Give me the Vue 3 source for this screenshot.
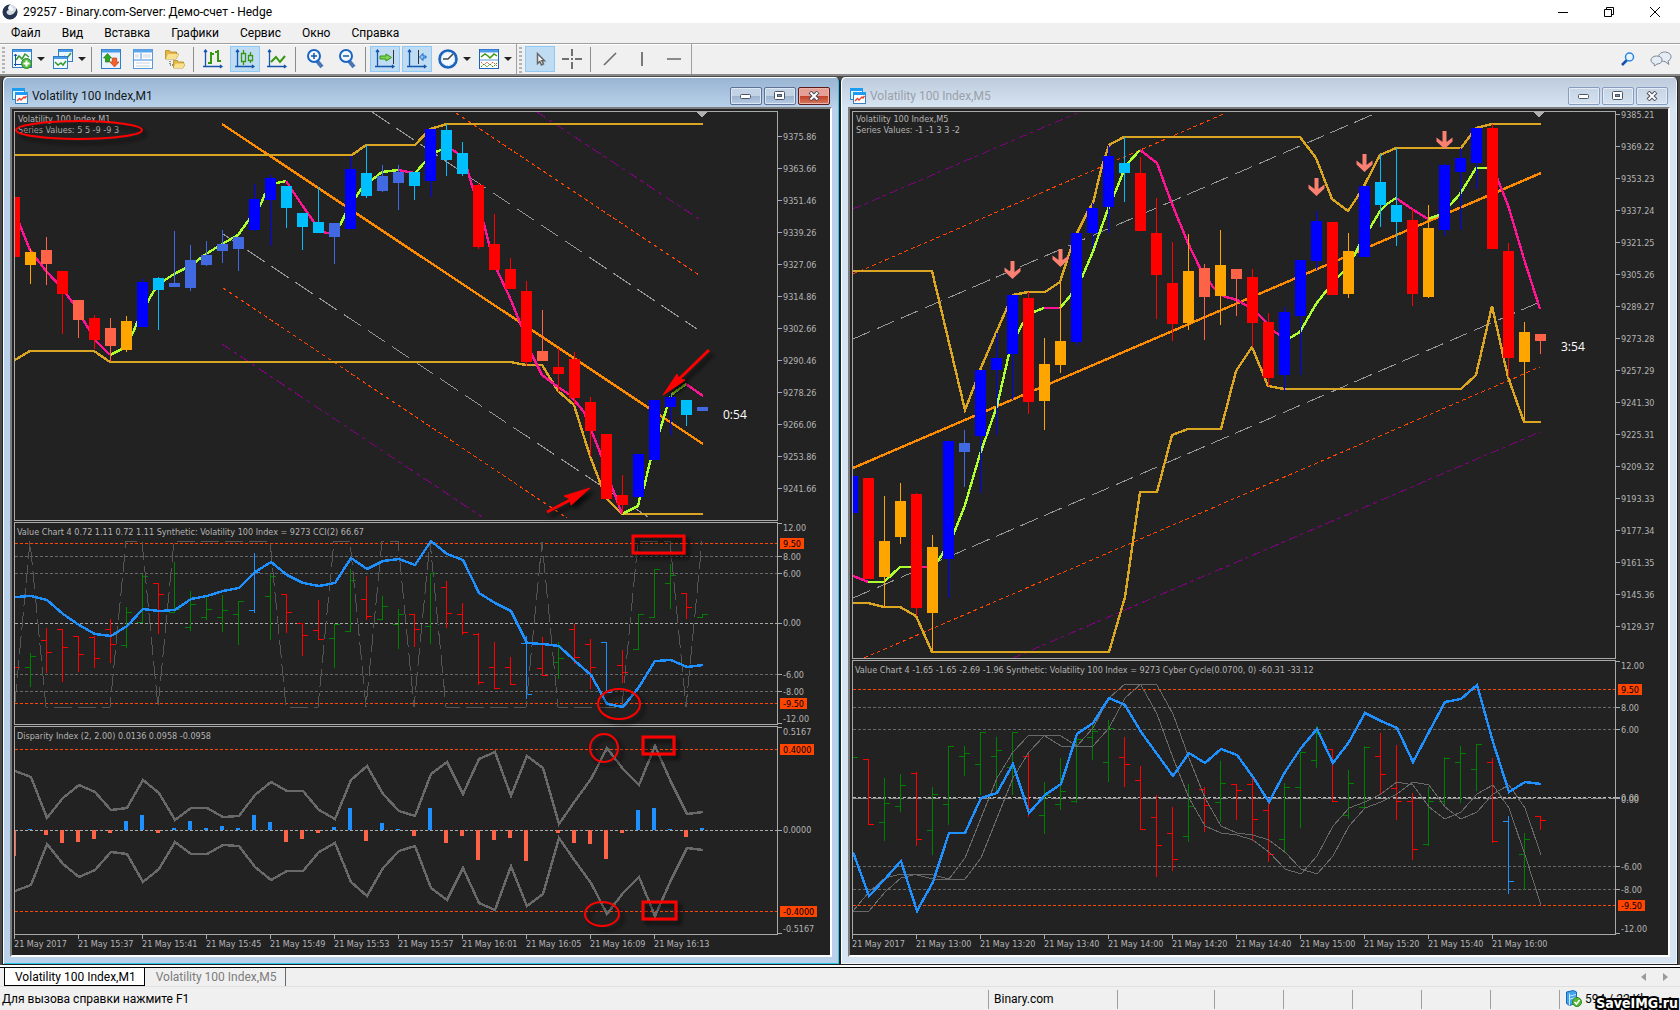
<script setup>
const STEP = 16
const COLORS = {
  r: '#ff0000', o: '#ffa500', t: '#ff6347', b: '#0000ff', s: '#00bfff', y: '#4169e1',
  g: '#008000', d: '#1e90ff', pink: '#ff1493', lime: '#adff2f',
}

const pairs = (list, f = (v) => v) => {
  const out = []
  for (let i = 0; i < list.length; i += 2) out.push(`${list[i]},${f(list[i + 1])}`)
  return out.join(' ')
}
const byBar = (left, ys) => ys.map((y, i) => `${left + i * STEP + 1},${y}`).join(' ')

// rows: colour, body top, body bottom, wick top, wick bottom
const toCandles = (left, rows, f = (v) => v) => rows.map(([c, top, bottom, high, low], i) => {
  const x = left + i * STEP
  const t = f(top), b = f(bottom), h = f(high ?? top), l = f(low ?? bottom)
  return { x, t, height: Math.max(b - t, 2), h, wick: l - h, color: COLORS[c] }
})

// rows: colour, high, low, open, close
const toBars = (left, rows) => rows.map(([c, high, low, open, close], i) => {
  const x = left + i * STEP
  return { color: COLORS[c], path: `M${x} ${high}h1V${low + 1}h-1zM${x - 5} ${open}h5v1h-5zM${x + 1} ${close}h5v1h-5z` }
})

const scaleLabels = (first, step, count, y) =>
  Array.from({ length: count }, (_, k) => ({ y: y + k * 32, text: (first - step * k).toFixed(2) }))

const zoomed = (v) => Math.round(v * 1.1288 - 9)

const upperBand = [771, 777, 818, 798, 785, 792, 810, 808, 780, 793, 820, 808, 808, 817, 816, 795, 782, 791, 791, 810, 819, 780, 766, 794, 811, 816, 774, 762, 794, 759, 752, 796, 756, 768, 824, 801, 779, 748, 769, 785, 746, 782, 814, 812]
const histogram = [-26, 1, -5, -13, -12, -9, -3, 9, 15, -3, 2, 9, 2, 4, 2, 15, 8, -12, -9, -3, 3, 22, -11, 7, 1, -6, 22, -13, -6, -30, -10, -8, -31, 0, -3, -13, -14, -29, -3, 20, 22, 1, -7, 2]
const cycle = [911, 892, 878, 874, 875, 879, 879, 858, 818, 778, 752, 735, 736, 746, 746, 728, 698, 684, 685, 714, 758, 798, 826, 833, 835, 840, 852, 869, 874, 856, 826, 808, 802, 794, 782, 785, 807, 819, 812, 794, 785, 808, 855, 905]

const charts = [
  {
    id: 'm1',
    title: 'Volatility 100 Index,M1',
    active: true,
    left: 12,
    panels: [[111, 520], [522, 724], [726, 934]],
    notes: [
      { x: 18, y: 122, text: 'Volatility 100 Index,M1' },
      { x: 18, y: 133, text: 'Series Values: 5 5 -9 -9 3' },
      { x: 17, y: 535, text: 'Value Chart 4 0.72 1.11 0.72 1.11 Synthetic: Volatility 100 Index = 9273 CCI(2) 66.67' },
      { x: 17, y: 739, text: 'Disparity Index (2, 2.00) 0.0136 0.0958 -0.0958' },
    ],
    timer: { x: 723, y: 419, text: '0:54' },
    scale: scaleLabels(9375.86, 12.2, 12, 136),
    labels: [
      { y: 527, text: '12.00', tick: 523 }, { y: 556, text: '8.00', tick: 556 }, { y: 573, text: '6.00', tick: 573 }, { y: 622, text: '0.00', tick: 623 },
      { y: 674, text: '-6.00', tick: 674 }, { y: 691, text: '-8.00', tick: 691 }, { y: 718, text: '-12.00', tick: 723 },
      { y: 731, text: '0.5167', tick: 727 }, { y: 829, text: '0.0000', tick: 830 }, { y: 928, text: '-0.5167', tick: 933 },
    ],
    marks: [
      { y: 543, text: '9.50', w: 24 }, { y: 703, text: '-9.50', w: 27 }, { y: 749, text: '0.4000', w: 34 }, { y: 911, text: '-0.4000', w: 37 },
    ],
    levels: [
      { y: 543, c: '#ff4500' }, { y: 556, c: '#696969' }, { y: 573, c: '#696969' }, { y: 623, c: '#a9a9a9' }, { y: 674, c: '#696969' },
      { y: 691, c: '#696969' }, { y: 703, c: '#ff4500' }, { y: 749, c: '#ff4500' }, { y: 830, c: '#a9a9a9' }, { y: 911, c: '#ff4500' },
    ],
    times: ['2017', '15:37', '15:41', '15:45', '15:49', '15:53', '15:57', '16:01', '16:05', '16:09', '16:13'],
    marker: 702,
    channel: [
      { d: 'M372 112L697 329M223 234L648 517', c: '#989898', dash: '21 8' },
      { d: 'M456 113L699 275M223 288L567 518', c: '#ff4500', dash: '4 3' },
      { d: 'M537 112L699 219M222 344L482 517', c: '#800080', dash: '10 4 4 4' },
      { d: 'M222 124L703 444', c: '#ff8c00', w: 2.4 },
    ],
    bands: [
      pairs([15, 155, 352, 155, 366, 145, 415, 145, 430, 129, 447, 124, 703, 124]),
      pairs([15, 360, 30, 351, 94, 351, 110, 362, 510, 362, 526, 365, 542, 365, 558, 391, 574, 405, 590, 456, 606, 498, 622, 514, 703, 514]),
    ],
    average: [
      { c: 'pink', p: pairs([14, 205, 20, 225, 30, 250, 46, 271, 62, 288, 73, 303, 82, 318, 96, 341, 110, 355]) },
      { c: 'lime', p: pairs([110, 355, 122, 349, 133, 333, 137, 323, 148, 301, 154, 291, 165, 280, 174, 274, 190, 266, 206, 254, 222, 244, 238, 235, 248, 221, 261, 204, 265, 194, 271, 185, 277, 183, 286, 181]) },
      { c: 'pink', p: pairs([286, 181, 302, 205, 314, 222, 322, 232, 334, 234]) },
      { c: 'lime', p: pairs([334, 234, 340, 225, 345, 215, 356, 197, 361, 189, 373, 179, 382, 172, 398, 170]) },
      { c: 'pink', p: pairs([398, 170, 414, 173]) },
      { c: 'lime', p: pairs([416, 172, 425, 162, 430, 156, 436, 152, 446, 148]) },
      { c: 'pink', p: pairs([446, 148, 453, 150, 464, 158, 473, 189, 484, 224, 489, 244, 497, 270, 510, 298, 519, 320, 532, 355, 542, 375, 558, 387, 570, 395, 584, 412, 601, 455, 612, 487, 622, 514]) },
      { c: 'lime', p: pairs([622, 514, 638, 506, 640, 497, 644, 487, 650, 462, 660, 430, 667, 407, 671, 395, 686, 384]) },
      { c: 'pink', p: pairs([686, 384, 703, 396]) },
    ],
    candles: toCandles(14, [
      ['r', 197, 257], ['o', 252, 265, 249, 284], ['t', 250, 264, 237, 285], ['r', 271, 294, 271, 334], ['t', 300, 320, 300, 338],
      ['r', 318, 340, 315, 349], ['t', 328, 346, 318, 362], ['o', 321, 350, 316, 352], ['b', 282, 327, 279], ['s', 278, 290, 277, 330],
      ['y', 283, 287, 231], ['y', 260, 288, 245, 291], ['y', 255, 265, 241, 266], ['y', 244, 251, 230, 263], ['y', 237, 249, 237, 271],
      ['b', 199, 230, 184, 231], ['b', 178, 200, 175, 246], ['s', 186, 208, 186, 228], ['s', 213, 227, 213, 250], ['s', 222, 233, 187],
      ['y', 223, 237, 223, 264], ['b', 169, 229, 156], ['s', 173, 196, 145, 198], ['y', 176, 191, 165, 192], ['y', 172, 183, 165, 210],
      ['s', 172, 186, 172, 200], ['b', 129, 181, 129, 197], ['s', 130, 160, 124, 176], ['s', 153, 174, 142, 176], ['r', 185, 247, 183, 249],
      ['r', 244, 270, 214], ['r', 269, 289, 258], ['r', 291, 362, 281, 366], ['t', 351, 361, 310], ['r', 367, 374, 348, 392],
      ['r', 359, 398, 352, 405], ['r', 402, 431, 397, 456], ['r', 434, 499], ['r', 495, 505, 475, 514], ['b', 454, 497], ['b', 400, 460],
      ['b', 397, 407, 393, 435], ['s', 400, 415, 400, 426], ['y', 407, 411],
    ]),
    thin: [
      { p: pairs([15, 702, 30, 541, 46, 707, 110, 707, 126, 541, 142, 541, 158, 707, 174, 541, 270, 541, 286, 707, 318, 707, 334, 541, 350, 541, 366, 707, 382, 541, 398, 541, 414, 707, 430, 541, 446, 707, 526, 707, 542, 542, 558, 707, 622, 707, 638, 541, 670, 541, 686, 707, 702, 541]), c: '#555555', dash: '18 6' },
    ],
    thick: [
      { p: byBar(14, upperBand), c: '#696969' },
      { p: byBar(14, upperBand.map((y) => 1662 - y)), c: '#696969' },
      { p: byBar(14, [597, 596, 600, 614, 625, 634, 636, 626, 609, 611, 610, 599, 596, 591, 588, 572, 562, 575, 583, 586, 583, 558, 569, 561, 559, 565, 541, 554, 560, 593, 603, 611, 643, 644, 646, 661, 675, 704, 707, 687, 661, 660, 667, 665]), c: '#1e90ff' },
    ],
    bars: toBars(14, [
      ['r', 667, 667, 667, 667], ['g', 653, 686, 667, 656], ['r', 628, 672, 640, 652], ['r', 629, 681, 629, 647], ['r', 636, 671, 636, 654],
      ['r', 636, 667, 637, 658], ['r', 619, 662, 629, 644], ['g', 607, 647, 645, 612], ['g', 574, 622, 622, 576], ['r', 583, 633, 583, 594],
      ['g', 562, 612, 612, 609], ['g', 591, 630, 627, 604], ['g', 597, 619, 617, 609], ['g', 595, 631, 617, 610], ['g', 601, 644, 614, 601],
      ['d', 553, 612, 610, 572], ['g', 574, 639, 596, 576], ['r', 594, 632, 594, 612], ['r', 623, 655, 623, 635], ['r', 600, 639, 630, 639],
      ['g', 624, 667, 638, 624], ['g', 569, 631, 631, 580], ['r', 576, 619, 599, 616], ['g', 596, 619, 619, 606], ['g', 609, 648, 624, 614],
      ['r', 614, 646, 614, 629], ['g', 573, 643, 626, 573], ['r', 581, 627, 587, 613], ['r', 603, 634, 614, 632], ['r', 633, 684, 634, 682],
      ['r', 642, 688, 667, 688], ['r', 657, 684, 667, 684], ['d', 636, 698, 643, 694], ['r', 637, 675, 668, 675], ['g', 642, 678, 662, 658],
      ['r', 624, 663, 629, 657], ['r', 639, 688, 644, 667], ['d', 642, 692, 642, 692], ['r', 650, 682, 665, 672], ['g', 614, 649, 649, 614],
      ['g', 569, 617, 617, 569], ['g', 564, 608, 583, 575], ['r', 593, 618, 593, 607], ['g', 614, 617, 617, 614],
    ]),
    columns: histogram.map((v, i) => ({ x: 12 + i * STEP, y: v > 0 ? 830 - v : 830, h: Math.abs(v), c: v > 0 ? '#1e90ff' : '#ff6347' })),
    drops: [],
    annotated: true,
  },
  {
    id: 'm5',
    title: 'Volatility 100 Index,M5',
    active: false,
    left: 850,
    panels: [[111, 658], [660, 934]],
    notes: [
      { x: 856, y: 122, text: 'Volatility 100 Index,M5' },
      { x: 856, y: 133, text: 'Series Values: -1 -1 3 3 -2' },
      { x: 855, y: 673, text: 'Value Chart 4 -1.65 -1.65 -2.69 -1.96 Synthetic: Volatility 100 Index = 9273 Cyber Cycle(0.0700, 0) -60.31 -33.12' },
    ],
    timer: { x: 1561, y: 351, text: '3:54' },
    scale: scaleLabels(9385.21, 15.99, 17, 114),
    labels: [
      { y: 665, text: '12.00', tick: 661 }, { y: 707, text: '8.00', tick: 707 }, { y: 729, text: '6.00', tick: 729 }, { y: 797, text: '0.00', tick: 797 },
      { y: 799, text: '0.00', tick: 798 }, { y: 866, text: '-6.00', tick: 866 }, { y: 889, text: '-8.00', tick: 889 }, { y: 928, text: '-12.00', tick: 933 },
    ],
    marks: [{ y: 689, text: '9.50', w: 24 }, { y: 905, text: '-9.50', w: 27 }],
    levels: [
      { y: 689, c: '#ff4500' }, { y: 707, c: '#696969' }, { y: 729, c: '#696969' }, { y: 797, c: '#c0c0c0' },
      { y: 798, c: '#8a8a8a', dash: '15 3' }, { y: 866, c: '#696969' }, { y: 889, c: '#696969' }, { y: 905, c: '#ff4500' },
    ],
    times: ['2017', '13:00', '13:20', '13:40', '14:00', '14:20', '14:40', '15:00', '15:20', '15:40', '16:00'],
    marker: 1539,
    channel: [
      { d: 'M853 339L1374 114M853 598L1540 302', c: '#989898', dash: '19 7' },
      { d: 'M853 274L1226 113M864 658L1540 367', c: '#ff4500', dash: '4 3' },
      { d: 'M853 209L1077 113M1013 658L1540 432', c: '#800080', dash: '9 3 4 4' },
      { d: 'M853 468L1541 173', c: '#ff8c00', w: 2.4 },
    ],
    bands: [
      pairs([853, 248, 932, 248, 965, 371, 975, 348, 980, 336, 996, 303, 1007, 281, 1013, 269, 1028, 267, 1045, 267, 1060, 258, 1070, 230, 1077, 214, 1087, 197, 1093, 188, 1102, 155, 1109, 136, 1124, 129, 1300, 129, 1316, 148, 1332, 184, 1348, 195, 1358, 182, 1364, 173, 1380, 145, 1396, 139, 1461, 139, 1476, 121, 1492, 118, 1541, 118], zoomed),
      pairs([853, 542, 868, 542, 884, 546, 900, 546, 916, 554, 932, 586, 1109, 586, 1125, 537, 1140, 444, 1157, 444, 1172, 393, 1188, 388, 1221, 388, 1236, 337, 1252, 315, 1268, 350, 1284, 353, 1461, 353, 1476, 340, 1492, 279, 1508, 342, 1524, 382, 1541, 382], zoomed),
    ],
    average: [
      { c: 'pink', p: pairs([853, 518, 868, 524], zoomed) },
      { c: 'lime', p: pairs([868, 524, 884, 524, 900, 510, 916, 510], zoomed) },
      { c: 'pink', p: pairs([916, 510, 932, 510], zoomed) },
      { c: 'lime', p: pairs([936, 508, 943, 498, 954, 480, 965, 455, 980, 410, 997, 368, 1009, 322, 1018, 302, 1023, 294, 1034, 284, 1044, 281], zoomed) },
      { c: 'pink', p: pairs([1044, 281, 1060, 281], zoomed) },
      { c: 'lime', p: pairs([1060, 281, 1071, 269, 1082, 253, 1092, 233, 1108, 193, 1114, 181, 1123, 161, 1128, 152, 1140, 141], zoomed) },
      { c: 'pink', p: pairs([1140, 141, 1157, 152, 1172, 189, 1188, 223, 1200, 245, 1213, 262, 1223, 270, 1237, 274, 1247, 279, 1260, 288, 1275, 302, 1284, 307], zoomed) },
      { c: 'lime', p: pairs([1290, 307, 1300, 302, 1316, 277, 1327, 265, 1338, 253, 1343, 249, 1354, 235, 1359, 226, 1370, 210, 1380, 195, 1387, 189, 1396, 183], zoomed) },
      { c: 'pink', p: pairs([1396, 183, 1412, 193, 1428, 202], zoomed) },
      { c: 'lime', p: pairs([1428, 202, 1439, 198, 1450, 190, 1460, 180, 1476, 157, 1492, 157], zoomed) },
      { c: 'pink', p: pairs([1494, 160, 1498, 167, 1508, 190, 1524, 237, 1540, 282], zoomed) },
    ],
    candles: toCandles(852, [
      ['b', 430, 462], ['r', 431, 521], ['o', 487, 519, 447, 546], ['o', 452, 484, 436, 490], ['r', 446, 547, 445, 554], ['o', 493, 551, 482, 586],
      ['b', 399, 503, 399, 538], ['y', 400, 408, 389, 439], ['b', 336, 394, 336, 445], ['b', 325, 336, 303, 393], ['b', 269, 322, 269, 362],
      ['r', 272, 364, 267, 375], ['o', 330, 363, 307, 389], ['o', 310, 331, 258, 338], ['b', 214, 311, 214, 314], ['b', 192, 214, 188, 228],
      ['b', 146, 191, 136, 214], ['s', 152, 161, 129, 187], ['r', 161, 213, 147], ['r', 214, 252, 183, 291], ['r', 259, 295, 222, 310],
      ['o', 248, 294, 215, 300], ['t', 245, 271, 242, 309], ['o', 243, 270, 212, 296], ['t', 246, 255, 246, 288], ['r', 253, 294, 246, 315],
      ['r', 293, 343, 285, 350], ['b', 284, 340, 280, 354], ['b', 238, 288, 238, 340], ['b', 204, 239, 195, 247], ['r', 205, 269],
      ['o', 230, 268, 214, 272], ['b', 173, 236], ['s', 169, 190, 144, 209], ['s', 190, 205, 139, 226], ['r', 203, 268, 193, 279],
      ['o', 210, 271, 190, 272], ['b', 154, 212, 153, 217], ['b', 148, 160, 139, 212], ['b', 121, 152, 121, 175], ['r', 121, 229, 118],
      ['r', 230, 325, 223, 342], ['o', 302, 329, 293, 382], ['t', 304, 310, 304, 322],
    ], zoomed),
    thin: [
      { p: byBar(852, cycle), c: '#696969' },
      { p: byBar(852, [911, ...cycle.slice(0, -1)]), c: '#696969' },
    ],
    thick: [
      { p: byBar(852, [852, 896, 879, 861, 911, 882, 833, 833, 798, 793, 764, 813, 795, 784, 734, 723, 698, 705, 732, 754, 776, 753, 763, 749, 755, 777, 802, 772, 748, 729, 763, 742, 713, 721, 728, 762, 732, 702, 699, 685, 742, 792, 782, 784]), c: '#1e90ff' },
    ],
    bars: toBars(852, [
      ['g', 757, 757, 757, 757], ['r', 759, 824, 759, 824], ['g', 778, 840, 822, 803], ['g', 774, 811, 806, 785], ['r', 772, 845, 773, 839],
      ['g', 787, 854, 830, 794], ['g', 746, 824, 804, 746], ['g', 746, 775, 756, 753], ['g', 732, 794, 764, 732], ['g', 737, 792, 756, 750],
      ['g', 732, 794, 767, 732], ['r', 753, 816, 756, 809], ['g', 782, 833, 815, 795], ['g', 758, 809, 804, 791], ['g', 739, 802, 801, 739],
      ['g', 724, 759, 737, 731], ['g', 720, 781, 762, 728], ['r', 737, 786, 757, 764], ['r', 766, 829, 780, 829], ['r', 795, 876, 817, 845],
      ['r', 807, 870, 833, 859], ['g', 784, 841, 836, 806], ['r', 787, 831, 789, 805], ['g', 761, 821, 802, 783], ['r', 784, 819, 784, 790],
      ['r', 777, 840, 784, 819], ['r', 798, 861, 810, 854], ['g', 783, 852, 839, 787], ['g', 752, 827, 787, 752], ['g', 726, 767, 760, 733],
      ['r', 749, 801, 749, 801], ['g', 770, 818, 815, 783], ['g', 746, 808, 807, 747], ['r', 733, 794, 756, 774], ['r', 745, 819, 788, 801],
      ['r', 793, 859, 801, 849], ['g', 787, 845, 844, 801], ['g', 757, 804, 801, 758], ['g', 746, 802, 762, 753], ['g', 744, 790, 769, 744],
      ['r', 758, 842, 762, 841], ['d', 816, 893, 821, 881], ['g', 833, 889, 854, 839], ['r', 816, 829, 816, 820],
    ]),
    columns: [],
    drops: [[1012, 261], [1060, 249], [1316, 178], [1364, 154], [1444, 131]],
    annotated: false,
  },
]

const menu = ['Файл', 'Вид', 'Вставка', 'Графики', 'Сервис', 'Окно', 'Справка']
</script>

<template>
  <div class="terminal">
    <header class="titlebar">
      <svg class="logo" width="16" height="16" viewBox="0 0 16 16" aria-hidden="true">
        <circle cx="8" cy="8" r="7.5" fill="#d5dbe3" />
        <path d="M8 .5A7.500 7.500 0 1 0 15.500 8c0-1.500-.4-2.800-1.100-4-.2 3.500-2.600 6.500-6.200 6.900-2 .2-3.800-1-3.600-2.900.1-1.200 1.200-2 2.400-2-1.300-1.300-.6-3.800 1.700-5.400z" fill="#26344f" />
        <path d="M8.500.8C6 2 5.500 5 7.500 6.500c1.500 1 3.500.4 4.200-1.300" fill="#f4f6f9" />
      </svg>
      <h1>29257 - Binary.com-Server: Демо-счет - Hedge</h1>
      <div class="system">
        <button type="button" aria-label="Minimize"><svg width="10" height="10"><path d="M0 5.500h10" stroke="#000" /></svg></button>
        <button type="button" aria-label="Restore"><svg width="10" height="10" fill="none" stroke="#000"><path d="M.5 2.500h7v7h-7zM2.500 2.500v-2h7v7h-2" /></svg></button>
        <button type="button" aria-label="Close"><svg width="10" height="10"><path d="M0 0l10 10M10 0L0 10" stroke="#000" /></svg></button>
      </div>
    </header>

    <nav class="menubar">
      <button v-for="item in menu" :key="item" type="button">{{ item }}</button>
    </nav>

    <div class="toolbar" role="toolbar">
      <span class="grip"></span>
      <div class="split">
        <button type="button" aria-label="New chart">
          <svg width="20" height="20" viewBox="0 0 20 20" fill="none">
            <rect x=".5" y=".5" width="19" height="18" fill="#f4faff" stroke="#2f7cc8" /><path d="M1 2h18" stroke="#4c9be6" stroke-width="2" />
            <path d="M3.500 5v12M2 15.500h13M2 7l1.500-2L5 7" stroke="#1553a5" /><path d="M4 11l3-4 3 3 3-5 4 3" stroke="#35982a" stroke-width="1.500" />
            <circle cx="14.500" cy="14.500" r="5" fill="#58b947" stroke="#2c8a1e" /><path d="M14.500 11.500v6M11.500 14.500h6" stroke="#fff" stroke-width="2" />
          </svg>
        </button>
        <button class="caret" type="button" aria-label="New chart options"></button>
      </div>
      <div class="split">
        <button type="button" aria-label="Profiles">
          <svg width="20" height="20" viewBox="0 0 20 20" fill="none">
            <rect x="5.500" y=".5" width="14" height="12" fill="#eaf4ff" stroke="#2f7cc8" /><path d="M6 2h13" stroke="#4c9be6" stroke-width="2" /><path d="M11 7l3 2 4-5" stroke="#35982a" stroke-width="1.500" />
            <rect x=".5" y="7.500" width="14" height="12" fill="#f4faff" stroke="#2f7cc8" /><path d="M1 9h13" stroke="#4c9be6" stroke-width="2" /><path d="M2 13l3 3 3-2 2 2 3-4" stroke="#35982a" stroke-width="1.500" />
          </svg>
        </button>
        <button class="caret" type="button" aria-label="Profile options"></button>
      </div>
      <span class="sep"></span>
      <button type="button" aria-label="Market watch">
        <svg width="20" height="20" viewBox="0 0 20 20">
          <rect x=".5" y=".5" width="19" height="19" fill="#eaf4ff" stroke="#2f7cc8" /><path d="M1 2h18" stroke="#4c9be6" stroke-width="3" />
          <path d="M6.500 4.500l4 4.500h-2v4h-4V9h-2z" fill="#2fa81f" stroke="#1d7a12" stroke-width=".7" />
          <path d="M13.500 18l4.500-5h-2.300V9h-4.400v4H9z" fill="#f2622e" stroke="#c43c10" stroke-width=".7" />
        </svg>
      </button>
      <button type="button" aria-label="Data window">
        <svg width="20" height="20" viewBox="0 0 20 20">
          <rect x=".5" y=".5" width="19" height="19" fill="#fff" stroke="#5a9ad8" /><path d="M1 2h18" stroke="#5aa4ea" stroke-width="3" /><path d="M1 11h18M8 4v7" stroke="#9cc4ec" stroke-width="2" />
          <path d="M2 6h4M2 8h4M10 6h8M10 8h8M3 14h14M3 17h14" stroke="#c9d3de" />
        </svg>
      </button>
      <button type="button" aria-label="Navigator">
        <svg width="20" height="20" viewBox="0 0 20 20">
          <path d="M.5 10V1.500h4l1 1.500h6v2h2l-2.500 5z" fill="#e2b640" stroke="#a87d17" stroke-width=".7" /><path d="M.8 10L3 5h10.500l-2.500 5z" fill="#f8e08c" />
          <path d="M8.500 19v-7.500h4l1 1.500h5v2h1.500L18 19z" fill="#e2b640" stroke="#a87d17" stroke-width=".7" /><path d="M8.500 19l2-4.500H20L18 19z" fill="#f8e08c" />
          <path d="M5 12v4h3" fill="none" stroke="#333" stroke-dasharray="1 1" />
        </svg>
      </button>
      <span class="sep"></span>
      <button type="button" aria-label="Bar chart">
        <svg width="20" height="20" viewBox="0 0 20 20" fill="none"><path d="M2.500 1v16M0 17.500h19M1 3l1.500-2L4 3M17 16l2 1.500-2 1.500" stroke="#1556ae" stroke-width="1.300" /><path d="M8 3v12M8 5h3M5 14h3M15 1v12M15 12h3M12 3h3" stroke="#35980e" stroke-width="2" /></svg>
      </button>
      <button class="on" type="button" aria-label="Candlesticks" aria-pressed="true">
        <svg width="20" height="20" viewBox="0 0 20 20" fill="none"><path d="M2.500 1v16M0 17.500h19M1 3l1.500-2L4 3M17 16l2 1.500-2 1.500" stroke="#1556ae" stroke-width="1.300" /><path d="M8.500 1v3M8.500 13v3M15.500 3v3M15.500 12v2M6.500 4.500h4v8h-4zM13.500 6.500h4v5h-4z" stroke="#35980e" stroke-width="1.300" /></svg>
      </button>
      <button type="button" aria-label="Line chart">
        <svg width="20" height="20" viewBox="0 0 20 20" fill="none"><path d="M2.500 1v16M0 17.500h19M1 3l1.500-2L4 3M17 16l2 1.500-2 1.500" stroke="#1556ae" stroke-width="1.300" /><path d="M4 13l5-5 4 5 5-6" stroke="#35980e" stroke-width="2" /></svg>
      </button>
      <span class="sep"></span>
      <button type="button" aria-label="Zoom in">
        <svg width="18" height="20" viewBox="0 0 18 20" fill="none"><path d="M11 12l5 6" stroke="#4a75b4" stroke-width="4" /><circle cx="8" cy="7" r="6" fill="#f3f9ff" stroke="#1b66c4" stroke-width="2" /><path d="M8 4v6M5 7h6" stroke="#1556ae" stroke-width="1.500" /></svg>
      </button>
      <button type="button" aria-label="Zoom out">
        <svg width="18" height="20" viewBox="0 0 18 20" fill="none"><path d="M11 12l5 6" stroke="#4a75b4" stroke-width="4" /><circle cx="8" cy="7" r="6" fill="#f3f9ff" stroke="#1b66c4" stroke-width="2" /><path d="M5 7h6" stroke="#1556ae" stroke-width="1.500" /></svg>
      </button>
      <span class="sep"></span>
      <button class="on" type="button" aria-label="Auto scroll" aria-pressed="true">
        <svg width="20" height="20" viewBox="0 0 20 20" fill="none"><path d="M2.500 1v16M0 17.500h19M1 3l1.500-2L4 3M17 16l2 1.500-2 1.500" stroke="#1556ae" stroke-width="1.300" /><path d="M18.500 1v14" stroke="#333" /><path d="M5 7h6V5l5.500 3.500L11 12v-2H5z" fill="#7fd45a" stroke="#35980e" /></svg>
      </button>
      <button class="on" type="button" aria-label="Chart shift" aria-pressed="true">
        <svg width="20" height="20" viewBox="0 0 20 20" fill="none"><path d="M2.500 1v16M0 17.500h19M1 3l1.500-2L4 3M17 16l2 1.500-2 1.500" stroke="#1556ae" stroke-width="1.300" /><path d="M11.500 1v14" stroke="#333" /><path d="M19 7h-3V4.500L12.500 8l3.500 3.500V9h3z" fill="#8cc4f8" stroke="#1b66c4" /></svg>
      </button>
      <div class="split">
        <button type="button" aria-label="Timeframe">
          <svg width="20" height="20" viewBox="0 0 20 20" fill="none"><circle cx="10" cy="10" r="8.500" fill="#f4f9ff" stroke="#1c63bd" stroke-width="2.600" /><circle cx="10" cy="10" r="6.500" stroke="#8fb8e4" stroke-dasharray="1 2.400" /><path d="M5 10h5l5-5" stroke="#444" stroke-width="1.500" /></svg>
        </button>
        <button class="caret" type="button" aria-label="Timeframe options"></button>
      </div>
      <div class="split">
        <button type="button" aria-label="Templates">
          <svg width="20" height="20" viewBox="0 0 20 20" fill="none"><rect x=".5" y=".5" width="19" height="19" fill="#fff" stroke="#1c63bd" /><path d="M1 2h18" stroke="#4c9be6" stroke-width="3" /><path d="M1 11h18" stroke="#5a9ad8" /><path d="M2 8l4-3 3 2 2 2 4-4 3 2" stroke="#35980e" stroke-width="1.500" /><path d="M2 13l3 3 3-3 3 3 3-3 4 4" stroke="#e2512e" stroke-dasharray="2 1" /><path d="M2 18l3-3 3 3 3-3 3 3 4-4" stroke="#35980e" stroke-dasharray="2 1" /></svg>
        </button>
        <button class="caret" type="button" aria-label="Template options"></button>
      </div>
      <span class="edge"></span>
      <span class="grip"></span>
      <button class="on" type="button" aria-label="Cursor" aria-pressed="true">
        <svg width="20" height="20" viewBox="0 0 20 20"><path d="M7.500 4.500v10l2.300-2 1.700 3.500 2-1-1.700-3.300h2.700z" fill="#f4f4f4" stroke="#666" stroke-width="1.500" /></svg>
      </button>
      <button type="button" aria-label="Crosshair">
        <svg width="20" height="20" viewBox="0 0 20 20"><path d="M0 10h7M13 10h7M10 0v7M10 13v7M9 10h2" stroke="#707070" stroke-width="2" /></svg>
      </button>
      <span class="sep"></span>
      <button type="button" aria-label="Trend line"><svg width="20" height="20" viewBox="0 0 20 20"><path d="M4 16L16 4" stroke="#6a6a6a" stroke-width="1.600" /></svg></button>
      <button type="button" aria-label="Vertical line"><svg width="20" height="20" viewBox="0 0 20 20"><path d="M9 3h2v14H9z" fill="#7a7a7a" /></svg></button>
      <button type="button" aria-label="Horizontal line"><svg width="20" height="20" viewBox="0 0 20 20"><path d="M3 9h14v2H3z" fill="#8a8a8a" /></svg></button>
      <span class="edge"></span>
      <div class="tools-right">
        <button type="button" aria-label="Search"><svg width="14" height="14" viewBox="0 0 14 14" fill="none"><path d="M6 8l-5 5" stroke="#1450a8" stroke-width="2.500" /><circle cx="8.500" cy="5" r="4" fill="#eaf6ff" stroke="#2a86e0" stroke-width="1.500" /></svg></button>
        <button type="button" aria-label="Messages"><svg width="22" height="16" viewBox="0 0 22 16" fill="#e4edf6" stroke="#7d8694"><path d="M18 10l1 3.500-4-3C11 10.500 8.500 8.500 8.500 6S11 1 14.500 1 21 3 21 5.500 19.500 9.500 18 10z" /><path d="M4 12.500L4.500 15 7 13c3 0 5-1.500 5-4s-2-4-5.500-4S1 7 1 9s1 3 3 3.500z" /></svg></button>
      </div>
    </div>

    <main class="workspace">
      <section v-for="w in charts" :key="w.id" class="chart-window" :class="{ active: w.active }">
        <header class="chart-title">
          <svg width="16" height="16" viewBox="0 0 16 16" fill="none">
            <rect x=".5" y=".5" width="12" height="11" fill="#e8f5ff" stroke="#1d92e2" /><path d="M0 1.500h13" stroke="#1d9cf0" stroke-width="3" />
            <rect x="3.500" y="4.500" width="12" height="11" fill="#fff" stroke="#3a80c0" /><path d="M3 5.500h13" stroke="#1d9cf0" stroke-width="3" /><path d="M5 13l2.500-2.500L9 12l3-3 1 1 1.500-2" stroke="#e8442a" stroke-width="1.400" />
          </svg>
          <h2>{{ w.title }}</h2>
          <div class="frame-buttons">
            <button type="button" aria-label="Minimize"><svg width="12" height="6"><rect x=".5" y="1.500" width="10" height="4" rx="1" fill="#fff" stroke="#4b5566" /></svg></button>
            <button type="button" aria-label="Maximize"><svg width="12" height="10"><rect x=".5" y=".5" width="10" height="8" rx="1" fill="#fff" stroke="#4b5566" /><rect x="3.500" y="3.500" width="4" height="2" fill="#7f93b3" stroke="#4b5566" /></svg></button>
            <button class="close" type="button" aria-label="Close"><svg width="12" height="10"><path d="M2 1l8 8M10 1L2 9" stroke="#4b4b5a" stroke-width="4" /><path d="M2.500 1.500l7 7M9.500 1.500l-7 7" stroke="#fff" stroke-width="2" /></svg></button>
          </div>
        </header>
        <div class="canvas">
          <svg class="plot" :viewBox="`${w.left} 109 818 846`" role="img" :aria-label="w.title">
            <defs>
              <clipPath :id="`area-${w.id}`"><rect :x="w.left + 3" y="112" width="762" height="822" /></clipPath>
              <clipPath :id="`price-${w.id}`"><rect :x="w.left + 3" y="112" width="762" :height="w.panels[0][1] - 112" /></clipPath>
              <filter :id="`shade-${w.id}`" x="-20%" y="-40%" width="150%" height="200%"><feDropShadow dx="4" dy="4" stdDeviation="2" flood-color="#000" flood-opacity=".7" /></filter>
            </defs>

            <g shape-rendering="crispEdges">
              <rect :x="w.left" y="109" width="818" height="846" fill="#222222" />
              <path v-for="(l, i) in w.levels" :key="'l' + i" :d="`M${w.left + 3} ${l.y + .5}h762`" :stroke="l.c" :stroke-dasharray="l.dash || '3 2'" />
              <g :clip-path="`url(#price-${w.id})`" fill="none">
                <path v-for="(l, i) in w.channel" :key="'h' + i" :d="l.d" :stroke="l.c" :stroke-width="l.w || 1" :stroke-dasharray="l.dash" />
                <polyline v-for="(p, i) in w.bands" :key="'g' + i" :points="p" stroke="#daa520" stroke-width="2.4" />
                <polyline v-for="(a, i) in w.average" :key="'a' + i" :points="a.p" :stroke="COLORS[a.c]" stroke-width="2.4" />
                <g v-for="(c, i) in w.candles" :key="'c' + i" :fill="c.color">
                  <rect :x="c.x" :y="c.h" width="1" :height="c.wick" />
                  <rect :x="c.x - 5" :y="c.t" width="11" :height="c.height" />
                </g>
              </g>
              <g :clip-path="`url(#area-${w.id})`" fill="none">
                <path v-for="(b, i) in w.bars" :key="'b' + i" :d="b.path" :fill="b.color" />
                <polyline v-for="(t, i) in w.thin" :key="'t' + i" :points="t.p" :stroke="t.c" :stroke-dasharray="t.dash" />
                <rect v-for="(c, i) in w.columns" :key="'v' + i" :x="c.x" :y="c.y" width="4" :height="c.h" :fill="c.c" />
                <polyline v-for="(t, i) in w.thick" :key="'k' + i" :points="t.p" :stroke="t.c" stroke-width="2.4" />
              </g>
              <rect v-for="p in w.panels" :key="p[0]" :x="w.left + 2.5" :y="p[0] + .5" width="763" :height="p[1] - p[0]" fill="none" stroke="#a9a9a9" />
              <path v-for="s in w.scale" :key="s.text" :d="`M${w.left + 766} ${s.y + .5}h4`" stroke="#a9a9a9" />
              <path v-for="s in w.labels" :key="'y' + s.y" :d="`M${w.left + 766} ${s.tick + .5}h4`" stroke="#a9a9a9" />
              <path v-for="(t, i) in w.times" :key="t" :d="`M${w.left + 2.5 + i * 64} 935v4`" stroke="#a9a9a9" />
              <rect v-for="m in w.marks" :key="m.text" :x="w.left + 768" :y="m.y - 5" :width="m.w" height="11" fill="#ff4500" />
              <path :d="`M${w.marker - 6} 112h11l-5 5h-1z`" fill="#b0b0b0" />
            </g>

            <path v-for="(d, i) in w.drops" :key="'d' + i" :transform="`translate(${d[0]} ${d[1]})`" d="M-1.500 0h4v11l6-4.500v4L.5 18l-8-7.500v-4l6 4.500z" fill="#fa8072" />

            <g class="figures">
              <text v-for="n in w.notes" :key="n.y" :x="n.x" :y="n.y">{{ n.text }}</text>
              <text v-for="s in w.scale" :key="s.text" :x="w.left + 771" :y="s.y + 4">{{ s.text }}</text>
              <text v-for="s in w.labels" :key="'x' + s.y" :x="w.left + 771" :y="s.y + 4">{{ s.text }}</text>
              <text v-for="m in w.marks" :key="'m' + m.text" class="on-mark" :x="w.left + 771" :y="m.y + 4">{{ m.text }}</text>
              <text v-for="(t, i) in w.times" :key="'t' + t" :x="w.left + 2 + i * 64" y="947">21 May {{ t }}</text>
              <text class="timer" :x="w.timer.x" :y="w.timer.y">{{ w.timer.text }}</text>
            </g>

            <g v-if="w.annotated" fill="none" stroke="#ff0000" stroke-width="3" :filter="`url(#shade-${w.id})`">
              <ellipse cx="79" cy="130" rx="63" ry="9" stroke-width="2" />
              <rect x="633" y="536" width="51" height="17" />
              <ellipse cx="619" cy="704" rx="21" ry="15" stroke-width="2" />
              <circle cx="604" cy="748" r="14" stroke-width="2" />
              <rect x="643" y="737" width="31" height="17" />
              <ellipse cx="602" cy="914" rx="17" ry="12" stroke-width="2" />
              <rect x="643" y="902" width="33" height="17" />
              <path d="M709 350L678 380M547 512L572 499" />
              <path d="M663 395l14-21 2 5 6 1z M590 488l-26 8 6 3 1 6z" fill="#ff0000" stroke-width="1" />
            </g>
          </svg>
        </div>
      </section>
    </main>

    <div class="tabs">
      <button class="tab current" type="button">Volatility 100 Index,M1</button>
      <button class="tab" type="button">Volatility 100 Index,M5</button>
      <div class="pager">
        <button type="button" aria-label="Previous"><svg width="5" height="8"><path d="M5 0v8L0 4z" fill="#9a9a9a" /></svg></button>
        <button type="button" aria-label="Next"><svg width="5" height="8"><path d="M0 0v8l5-4z" fill="#9a9a9a" /></svg></button>
      </div>
    </div>

    <footer class="status">
      <span class="hint">Для вызова справки нажмите F1</span>
      <span class="cell server">Binary.com</span>
      <span class="cell wide"></span>
      <span class="cell"></span>
      <span class="cell"></span>
      <span class="cell"></span>
      <span class="cell"></span>
      <span class="cell"></span>
      <span class="cell traffic">
        <svg width="17" height="17" viewBox="0 0 17 17" fill="none"><path d="M1.500 2l7-1.500 3 1.500v11l-7 2.500-3-2z" fill="#3fa4ea" stroke="#1668b8" /><path d="M4.500 3.500v12M5 6l6-1.500M5 9l6-1.500" stroke="#c8e8ff" /><circle cx="12" cy="12" r="4.500" fill="#57b83a" stroke="#2f8a1c" /><path d="M9.500 12l2 2 3-4" stroke="#fff" stroke-width="1.500" /></svg>
        594 / 22 Kb
      </span>
      <span class="watermark">SaveIMG.ru</span>
    </footer>
  </div>
</template>

<style>
body { margin: 0; background: #f0f0f0; }
</style>

<style scoped>
.terminal {
  display: flex;
  flex-direction: column;
  min-width: 1200px;
  background: #f0f0f0;
  color: #000;
  font-family: Roboto, "Noto Sans", sans-serif;
  font-size: 12px;
  line-height: 16px;
}
button { padding: 0; border: 0; background: none; color: inherit; font: inherit; }
h1, h2 { margin: 0; font-size: 12px; font-weight: 400; }
svg { display: block; }

.titlebar { display: flex; align-items: center; height: 23px; padding: 0 2px; background: #fff; }
.logo { margin-right: 5px; }
.system { display: flex; margin-left: auto; }
.system button { display: flex; align-items: center; justify-content: center; width: 46px; height: 20px; }

.menubar { display: flex; height: 20px; padding-left: 1px; }
.menubar button { padding: 0 11px 0 10px; line-height: 19px; }

.toolbar { display: flex; align-items: center; height: 30px; border-top: 1px solid #a0a0a0; box-shadow: inset 0 1px #fff; }
.toolbar button { display: flex; flex: none; align-items: center; justify-content: center; box-sizing: border-box; width: 30px; height: 26px; margin-right: 2px; }
.toolbar .on { border: 1px solid #90c8f6; background: #c0dcf3; }
.toolbar .split { display: flex; margin-right: 4px; }
.toolbar .split button { width: 28px; margin: 0; }
.toolbar .split .caret { width: 9px; }
.caret::after { content: ""; border: 4px solid transparent; border-top-color: #222; border-bottom: 0; }
.grip { width: 3px; height: 26px; margin: 1px 3px 0 2px; background: repeating-linear-gradient(#b4b4b4 0 2px, transparent 2px 4px); }
.sep { width: 1px; height: 25px; margin: 0 4px 0 1px; background: #8c8c8c; }
.edge { align-self: stretch; width: 1px; background: #a0a0a0; }
.tools-right { display: flex; align-items: center; gap: 1px; margin-left: auto; padding-right: 2px; }

.workspace { display: flex; padding: 1px 2px 0; border-top: 2px solid #8a8a8a; background: #4a4a4a; }
.chart-window {
  flex: 1;
  min-width: 0;
  border: 1px solid #222;
  border-top: 0;
  border-radius: 5px 5px 0 0;
  box-shadow: inset 1px 1px #fff, inset -1px -1px #f2f6fb;
  background: linear-gradient(#bccadb, #d7e4f2 30px);
  padding: 0 7px 7px;
}
.chart-window.active { box-shadow: inset 1px 1px #fff, inset -1px -1px #2cc8e8; background: linear-gradient(#98b4d2, #b9d1ea 30px); }
.chart-title { display: flex; align-items: center; box-sizing: border-box; height: 30px; padding: 7px 0 0 2px; }
.chart-title h2 { margin-left: 4px; color: #98a0a8; }
.active .chart-title h2 { color: #101820; }
.frame-buttons { display: flex; gap: 2px; margin-left: auto; padding-right: 2px; }
.frame-buttons button {
  display: flex;
  align-items: center;
  justify-content: center;
  box-sizing: border-box;
  width: 32px;
  height: 18px;
  border: 1px solid #8a9bc0;
  border-radius: 2px;
  box-shadow: inset 0 0 0 1px #e4edf7;
}
.active .frame-buttons button { border-color: #5f7195; background: linear-gradient(#c3d3e6 50%, #9cb2cd 50%, #b7cde6); box-shadow: inset 0 0 0 1px #dbe7f4; }
.active .frame-buttons .close { border-color: #5b1a1a; background: linear-gradient(#e4a097 50%, #bf4027 50%, #d8795e); box-shadow: inset 0 0 0 1px #eab5a8; }
.canvas { border: 2px solid #fff; border-top-color: #7c7c7c; border-left-color: #7c7c7c; }
.plot { width: 100%; height: auto; }
.figures { fill: #b4b4b4; font: 9px "DejaVu Sans Condensed", "DejaVu Sans", sans-serif; }
.figures .on-mark { fill: #000; }
.figures .timer { fill: #fff; font: 12px "Open Sans", sans-serif; }

.tabs { display: flex; height: 20px; margin-top: 2px; box-sizing: border-box; border-top: 1px solid #000; border-bottom: 1px solid #e0e0e0; box-shadow: 0 -2px #fff; }
.tab { height: 18px; padding: 0 9px 0 11px; color: #7c7c7c; line-height: 19px; border-right: 1px solid #6a6a6a; }
.tab.current { margin-left: 4px; padding: 0 8px 0 10px; border: 1px solid #000; border-top: 0; background: #fff; color: #000; }
.pager { display: flex; align-items: center; gap: 17px; margin: 0 12px 0 auto; }

.status { position: relative; display: flex; align-items: stretch; height: 23px; line-height: 25px; }
.hint { flex: 1; padding-left: 2px; }
.cell { flex: 0 1 69px; min-width: 0; box-sizing: border-box; margin: 3px 0 1px; border-left: 1px solid #a0a0a0; line-height: 19px; }
.server { flex-basis: 129px; padding-left: 5px; }
.wide { flex-basis: 97px; }
.traffic { display: flex; flex-basis: 121px; gap: 3px; padding-left: 5px; white-space: nowrap; }
.watermark {
  position: absolute;
  right: 2px;
  bottom: 0;
  color: #fff;
  font: bold 14px/14px "DejaVu Sans Condensed", "DejaVu Sans", sans-serif;
  -webkit-text-stroke: 4px #000;
  paint-order: stroke fill;
}
</style>
